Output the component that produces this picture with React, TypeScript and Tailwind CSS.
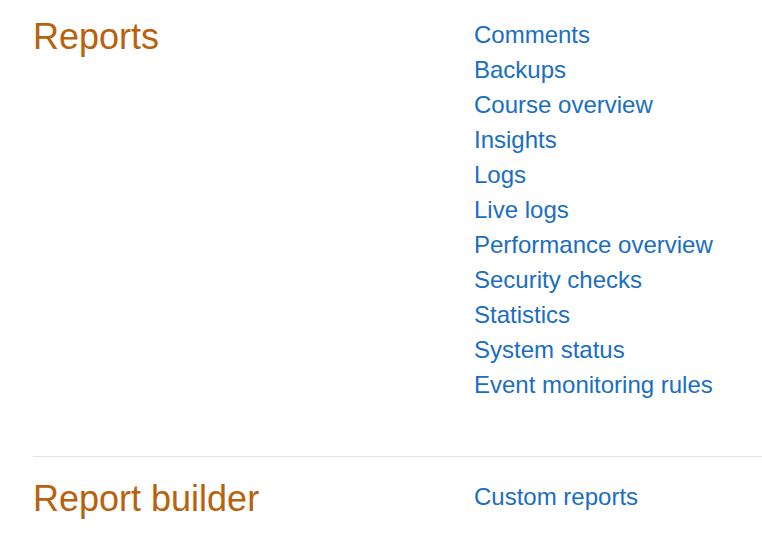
const sections = [
  {
    title: "Reports",
    links: [
      "Comments",
      "Backups",
      "Course overview",
      "Insights",
      "Logs",
      "Live logs",
      "Performance overview",
      "Security checks",
      "Statistics",
      "System status",
      "Event monitoring rules",
    ],
  },
  {
    title: "Report builder",
    links: ["Custom reports"],
  },
];

export default function App() {
  return (
    <div className="min-h-screen bg-white pl-[33px] font-['Liberation_Sans',Arial,sans-serif]">
      {sections.map((s, i) => (
        <div
          key={s.title}
          className={
            i === 0
              ? "flex pt-[17px] pb-[54px] border-b border-[#e3e3e3]"
              : "flex pt-[22px]"
          }
        >
          <h2 className="w-[441px] shrink-0 text-[36px] leading-[40px] text-[#b8620e] font-normal">
            {s.title}
          </h2>
          <ul className="flex flex-col">
            {s.links.map((l) => (
              <li key={l} className="text-[24px] leading-[35px]">
                <a href="#" className="text-[#1a6ec2]">
                  {l}
                </a>
              </li>
            ))}
          </ul>
        </div>
      ))}
    </div>
  );
}
